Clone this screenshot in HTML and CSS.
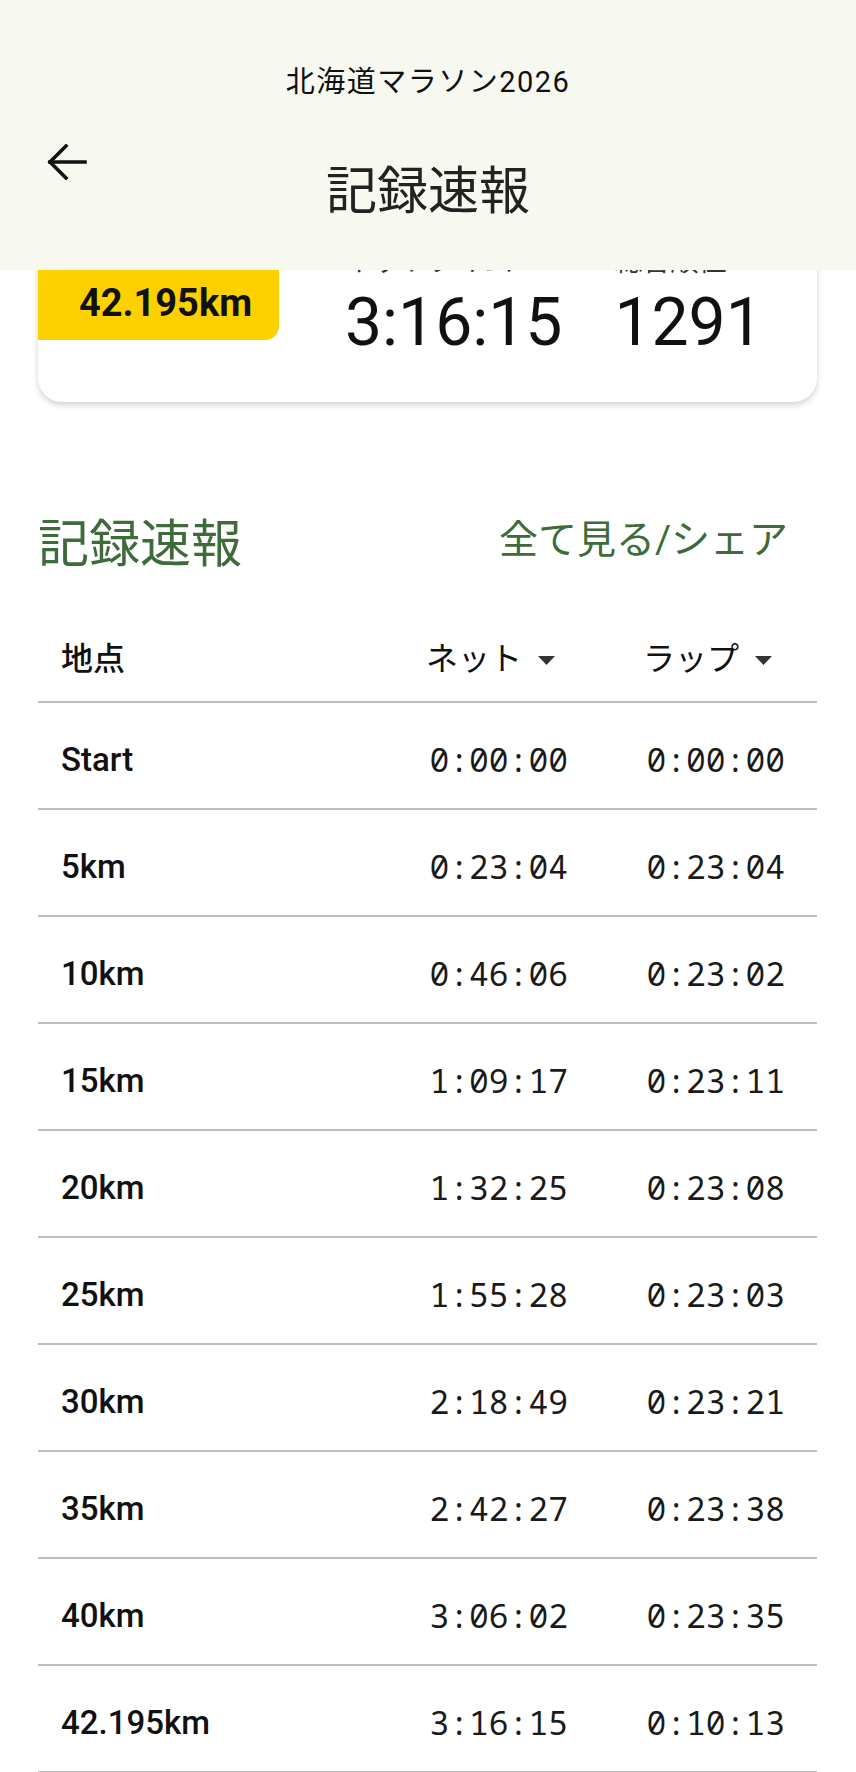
FILE: index.html
```html
<!DOCTYPE html>
<html lang="ja">
<head>
    <meta charset="utf-8">
    <title>記録速報 - 北海道マラソン2026</title>
    <meta name="viewport" content="width=device-width, initial-scale=1.0">
    <link rel="stylesheet" href="styles.css">
</head>
<body>
    <!-- App bar (stays on top while the page scrolls) -->
    <header class="appbar">
        <div class="appbar-event">北海道マラソン2026</div>
        <div class="appbar-row">
            <button class="back-btn" aria-label="戻る">
                <svg width="42" height="36" viewBox="0 0 42 36" fill="none" stroke="#111" stroke-width="3.6" stroke-linecap="square">
                    <path d="M4 18H39"/>
                    <path d="M20 2L4 18L20 34"/>
                </svg>
            </button>
            <h1 class="appbar-title">記録速報</h1>
        </div>
    </header>

    <main class="content">
        <!-- Result summary -->
        <section class="result-card">
            <div class="distance-tab">42.195km</div>
            <div class="stats">
                <div class="stat">
                    <div class="stat-label">ネットタイム</div>
                    <div class="stat-value">3:16:15</div>
                </div>
                <div class="stat">
                    <div class="stat-label">総合順位</div>
                    <div class="stat-value">1291</div>
                </div>
            </div>
        </section>

        <!-- Split times -->
        <section class="splits">
            <div class="splits-head">
                <h2>記録速報</h2>
                <a class="see-all" href="#">全て見る/シェア</a>
            </div>

            <div class="split-table">
                <div class="split-row split-header">
                    <span class="col-point">地点</span>
                    <span class="col-time">ネット<svg class="sort" width="17" height="9" viewBox="0 0 17 9"><path d="M0 0H17L8.5 9Z" fill="#333"/></svg></span>
                    <span class="col-time">ラップ<svg class="sort" width="17" height="9" viewBox="0 0 17 9"><path d="M0 0H17L8.5 9Z" fill="#333"/></svg></span>
                </div>
                <div class="split-row"><span class="col-point">Start</span><span class="col-time">0:00:00</span><span class="col-time">0:00:00</span></div>
                <div class="split-row"><span class="col-point">5km</span><span class="col-time">0:23:04</span><span class="col-time">0:23:04</span></div>
                <div class="split-row"><span class="col-point">10km</span><span class="col-time">0:46:06</span><span class="col-time">0:23:02</span></div>
                <div class="split-row"><span class="col-point">15km</span><span class="col-time">1:09:17</span><span class="col-time">0:23:11</span></div>
                <div class="split-row"><span class="col-point">20km</span><span class="col-time">1:32:25</span><span class="col-time">0:23:08</span></div>
                <div class="split-row"><span class="col-point">25km</span><span class="col-time">1:55:28</span><span class="col-time">0:23:03</span></div>
                <div class="split-row"><span class="col-point">30km</span><span class="col-time">2:18:49</span><span class="col-time">0:23:21</span></div>
                <div class="split-row"><span class="col-point">35km</span><span class="col-time">2:42:27</span><span class="col-time">0:23:38</span></div>
                <div class="split-row"><span class="col-point">40km</span><span class="col-time">3:06:02</span><span class="col-time">0:23:35</span></div>
                <div class="split-row"><span class="col-point">42.195km</span><span class="col-time">3:16:15</span><span class="col-time">0:10:13</span></div>
            </div>
        </section>
    </main>
</body>
</html>
```

FILE: styles.css
```css
body {
    margin: 0;
    background: #fff;
    color: #111;
    font-family: Roboto, "Noto Sans CJK JP", sans-serif;
}

/* ---------- app bar ---------- */
.appbar {
    position: fixed;
    top: 0;
    left: 0;
    right: 0;
    z-index: 10;
    height: 270px;
    box-sizing: border-box;
    padding-top: 62px;
    background: #f7f9f1;
}
.appbar-event {
    text-align: center;
    font-size: 29px;
    line-height: 40px;
    letter-spacing: 1.5px;
    color: #111;
}
.appbar-row {
    display: grid;
    grid-template-columns: 1fr auto 1fr;
    margin-top: 42px;
}
.back-btn {
    justify-self: start;
    align-self: start;
    margin-left: 46px;
    padding: 0;
    border: none;
    background: none;
    cursor: pointer;
}
.back-btn svg { display: block; }
.appbar-title {
    margin: 22px 0 0;
    font-size: 51px;
    line-height: 51px;
    font-weight: 400;
    color: #222;
}

/* ---------- content ---------- */
.content {
    padding-top: 200px;
}

.result-card {
    display: flex;
    align-items: flex-start;
    margin: 0 39px 0 38px;
    padding-bottom: 46px;
    background: #fff;
    border-radius: 24px;
    overflow: hidden;
    box-shadow: 0 3px 6px rgba(0, 0, 0, 0.18);
}
.distance-tab {
    display: flex;
    align-items: flex-end;
    justify-content: center;
    flex: 0 0 241px;
    height: 140px;
    box-sizing: border-box;
    padding: 0 0 15px 14px;
    background: #fdd000;
    border-bottom-right-radius: 14px;
    font-size: 38px;
    line-height: 44px;
    font-weight: 700;
}
.stats {
    display: flex;
    gap: 52px;
    margin-left: 66px;
    padding-top: 44px;
}
.stat-label {
    font-size: 28px;
    line-height: 36px;
    color: #333;
}
.stat-value {
    margin-top: 10px;
    font-size: 66px;
    line-height: 66px;
}

/* ---------- splits ---------- */
.splits {
    margin: 118px 39px 0 38px;
}
.splits-head {
    display: flex;
    justify-content: space-between;
    align-items: flex-start;
    padding-right: 29px;
}
.splits-head h2 {
    margin: 0;
    font-size: 51px;
    line-height: 50px;
    font-weight: 400;
    color: #3d6b39;
}
.see-all {
    margin-top: 1px;
    font-size: 39px;
    line-height: 38px;
    color: #3d6b39;
    text-decoration: none;
}

.split-table {
    margin-top: 41px;
}
.split-row {
    display: grid;
    grid-template-columns: 1fr 200px 217px;
    align-items: center;
    height: 107px;
    box-sizing: border-box;
    padding: 8px 32px 0 23px;
    border-bottom: 2px solid #bdbdbd;
}
.split-header {
    height: 92px;
    padding-top: 0;
}
.col-point {
    font-size: 33px;
    font-weight: 500;
}
.col-time {
    text-align: right;
    font-family: "Noto Sans Mono", "Droid Sans Mono", "DejaVu Sans Mono", monospace;
    font-size: 33px;
    color: #1a1a1a;
}
.split-header .col-point,
.split-header .col-time {
    font-family: Roboto, "Noto Sans CJK JP", sans-serif;
    font-size: 32px;
    color: #111;
}
.split-header .col-point {
    font-weight: 500;
}
.split-header .col-time {
    padding-right: 13px;
    font-weight: 400;
}
.sort {
    margin-left: 16px;
    vertical-align: 5px;
}
```
